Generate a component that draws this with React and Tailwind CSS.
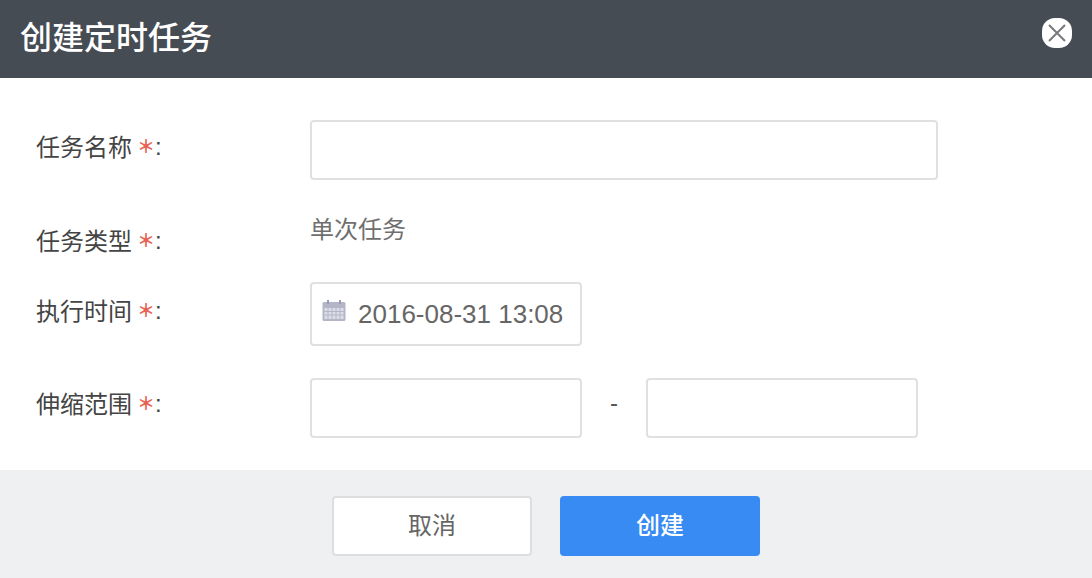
const FONT = "font-['Liberation_Sans','Noto_Sans_CJK_SC',sans-serif]";

const Label = ({ children, className = "" }) => (
	<div className={`flex w-[310px] shrink-0 pl-9 text-[24px] leading-[30px] text-[#444444] ${className}`}>
		{children}
		<span className="relative ml-[7px] w-[14px] text-[#e8604f]">
			<span className="absolute top-[-3px] left-[-2px] w-[18px] font-['Noto_Sans_CJK_SC',sans-serif] text-[18px] leading-[30px] font-bold">＊</span>
		</span>
		<span className="ml-[2px] -mt-[1px]">:</span>
	</div>
);

const CalendarIcon = () => (
	<svg width="24" height="22" viewBox="0 0 24 22" className="-mt-[7px] shrink-0">
		<rect x="0.5" y="2" width="23" height="19" rx="1.5" fill="#b4b6c8" />
		<rect x="5" y="0" width="2" height="4" fill="#9a9cb2" />
		<rect x="17" y="0" width="2" height="4" fill="#9a9cb2" />
		<rect x="2.5" y="8" width="19" height="11" fill="#dcdde6" />
		<path d="M2.5 11.5h19M2.5 15h19M6 8v11M10 8v11M14 8v11M18 8v11" stroke="#b4b6c8" strokeWidth="1" />
	</svg>
);

const App = () => {
	return (
		<div className={`flex h-[578px] w-[1092px] flex-col overflow-hidden bg-white ${FONT}`}>
			<header className="flex h-[78px] shrink-0 items-start justify-between bg-[#464c54] pl-5 pr-5">
				<h1 className="mt-[15px] text-[32px] leading-[46px] font-medium text-white">创建定时任务</h1>
				<button className="mt-[18px] flex h-[30px] w-[30px] items-center justify-center rounded-[13px] bg-white">
					<svg width="22" height="22" viewBox="0 0 22 22">
						<path d="M3 3l16 16M19 3L3 19" stroke="#77797d" strokeWidth="2" />
					</svg>
				</button>
			</header>

			<main className="flex flex-1 flex-col pt-[42px]">
				<div className="flex h-[60px] items-center">
					<Label className="-mt-[4px]">任务名称</Label>
					<input className="h-[60px] w-[628px] rounded-[4px] border-2 border-[#dfe0e2] bg-white" />
				</div>
				<div className="flex h-[102px]">
					<Label className="mt-[47px]">任务类型</Label>
					<div className="mt-[35px] text-[24px] leading-[30px] text-[#6f6f6f]">单次任务</div>
				</div>
				<div className="flex h-[64px]">
					<Label className="mt-[15px]">执行时间</Label>
					<div className="flex h-[64px] w-[272px] items-center rounded-[4px] border-2 border-[#dfe0e2] bg-white pl-[10px]">
						<CalendarIcon />
						<span className="ml-[12px] text-[26px] leading-[30px] whitespace-nowrap text-[#666666]">2016-08-31 13:08</span>
					</div>
				</div>
				<div className="mt-8 flex h-[60px]">
					<Label className="mt-[12px]">伸缩范围</Label>
					<input className="h-[60px] w-[272px] rounded-[4px] border-2 border-[#dfe0e2] bg-white" />
					<div className="flex w-[64px] items-start justify-center pt-[10px] text-[24px] leading-[30px] font-medium text-[#555555]">-</div>
					<input className="h-[60px] w-[272px] rounded-[4px] border-2 border-[#dfe0e2] bg-white" />
				</div>
			</main>

			<footer className="flex h-[108px] shrink-0 justify-center gap-7 bg-[#eff0f2] pt-[26px]">
				<button className="h-[60px] w-[200px] rounded-[4px] border-2 border-[#dddee0] bg-white text-[24px] text-[#666666]">取消</button>
				<button className="h-[60px] w-[200px] rounded-[4px] bg-[#378bf3] text-[24px] font-medium text-white">创建</button>
			</footer>
		</div>
	);
};

export default App;
